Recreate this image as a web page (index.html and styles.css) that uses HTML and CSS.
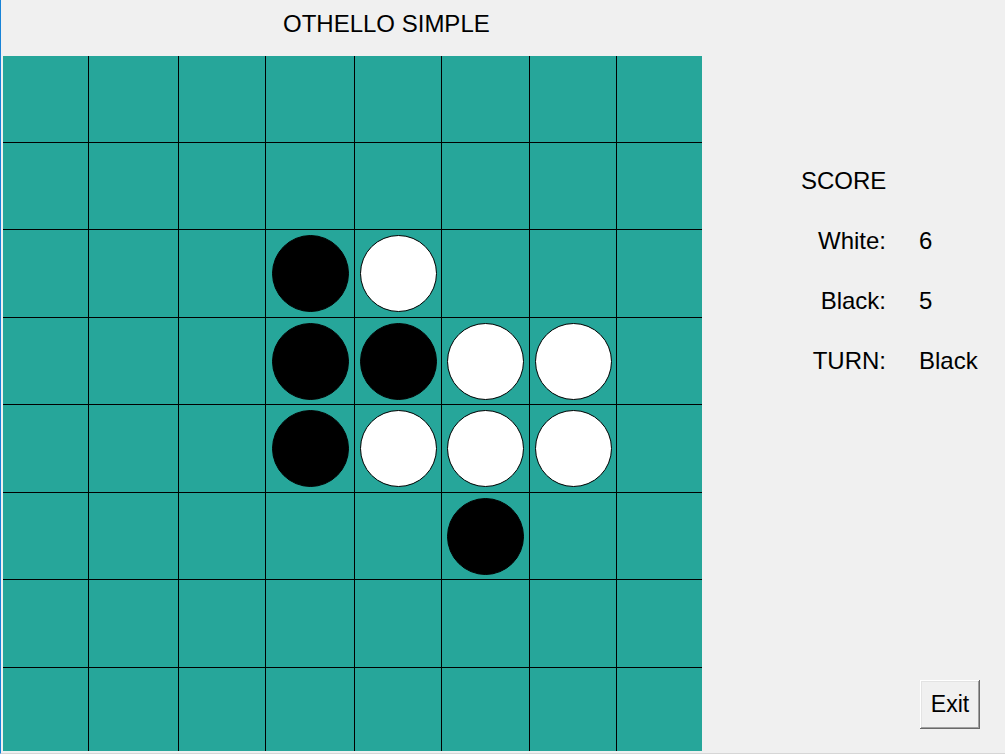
FILE: index.html
```html
<!DOCTYPE html>
<html>
<head>
<meta charset="utf-8">
<title>Othello Simple</title>
<link rel="stylesheet" href="styles.css">
</head>
<body>
<div class="window">
  <div class="title">OTHELLO SIMPLE</div>
  <div class="main">
    <div class="board">
      <div class="cell"></div><div class="cell"></div><div class="cell"></div><div class="cell"></div><div class="cell"></div><div class="cell"></div><div class="cell"></div><div class="cell"></div>
      <div class="cell"></div><div class="cell"></div><div class="cell"></div><div class="cell"></div><div class="cell"></div><div class="cell"></div><div class="cell"></div><div class="cell"></div>
      <div class="cell"></div><div class="cell"></div><div class="cell"></div><div class="cell"><span class="disc black"></span></div><div class="cell"><span class="disc white"></span></div><div class="cell"></div><div class="cell"></div><div class="cell"></div>
      <div class="cell"></div><div class="cell"></div><div class="cell"></div><div class="cell"><span class="disc black"></span></div><div class="cell"><span class="disc black"></span></div><div class="cell"><span class="disc white"></span></div><div class="cell"><span class="disc white"></span></div><div class="cell"></div>
      <div class="cell"></div><div class="cell"></div><div class="cell"></div><div class="cell"><span class="disc black"></span></div><div class="cell"><span class="disc white"></span></div><div class="cell"><span class="disc white"></span></div><div class="cell"><span class="disc white"></span></div><div class="cell"></div>
      <div class="cell"></div><div class="cell"></div><div class="cell"></div><div class="cell"></div><div class="cell"></div><div class="cell"><span class="disc black"></span></div><div class="cell"></div><div class="cell"></div>
      <div class="cell"></div><div class="cell"></div><div class="cell"></div><div class="cell"></div><div class="cell"></div><div class="cell"></div><div class="cell"></div><div class="cell"></div>
      <div class="cell"></div><div class="cell"></div><div class="cell"></div><div class="cell"></div><div class="cell"></div><div class="cell"></div><div class="cell"></div><div class="cell"></div>
    </div>
    <div class="side">
      <div class="score">
        <div class="heading">SCORE</div><div></div>
        <div class="label">White:</div><div class="value">6</div>
        <div class="label">Black:</div><div class="value">5</div>
        <div class="label">TURN:</div><div class="value">Black</div>
      </div>
      <button class="exit">Exit</button>
    </div>
  </div>
</div>
</body>
</html>
```

FILE: styles.css
```css
html, body {
  margin: 0;
  padding: 0;
  background: #f0f0f0;
}

body {
  font-family: "Liberation Sans", Arial, sans-serif;
  color: #000;
}

.window {
  width: 1005px;
  height: 754px;
  box-sizing: border-box;
  border-left: 1px solid #1883d7;
  border-bottom: 1px solid #d6d6d6;
  display: flex;
  flex-direction: column;
  overflow: hidden;
}

.title {
  height: 56px;
  box-sizing: border-box;
  padding: 10px 0 0 282px;
  font-size: 24px;
  line-height: 28px;
}

.main {
  display: flex;
  align-items: stretch;
}

.board {
  margin-left: 2px;
  width: 699px;
  height: 695px;
  display: grid;
  grid-template-columns: 85px 89px 86px 88px 86px 87px 86px 85px;
  grid-template-rows: 86px 86px 87px 86px 87px 86px 87px 83px;
  gap: 1px;
  background: #000;
  flex: none;
}

.cell {
  background: #26a69a;
  display: flex;
  align-items: center;
  justify-content: center;
}

.disc {
  width: 77px;
  height: 77px;
  box-sizing: border-box;
  border-radius: 50%;
  border: 1px solid #000;
}

.disc.black {
  background: #000;
}

.disc.white {
  background: #fff;
}

.side {
  flex: 1;
  display: flex;
  flex-direction: column;
}

.score {
  margin: 95px 0 0 99px;
  display: grid;
  grid-template-columns: 85px auto;
  column-gap: 33px;
  grid-auto-rows: 60px;
  font-size: 24px;
  line-height: 60px;
}

.label {
  text-align: right;
}

.value {
  text-align: left;
}

.exit {
  margin: auto 25px 22px auto;
  width: 60px;
  height: 49px;
  padding: 0;
  font-family: "Liberation Sans", Arial, sans-serif;
  font-size: 23px;
  color: #000;
  background: #f0f0f0;
  border: none;
  box-shadow: inset -1px -1px 0 #696969, inset 1px 1px 0 #ffffff, inset -2px -2px 0 #a0a0a0, inset 2px 2px 0 #e3e3e3;
}
```
